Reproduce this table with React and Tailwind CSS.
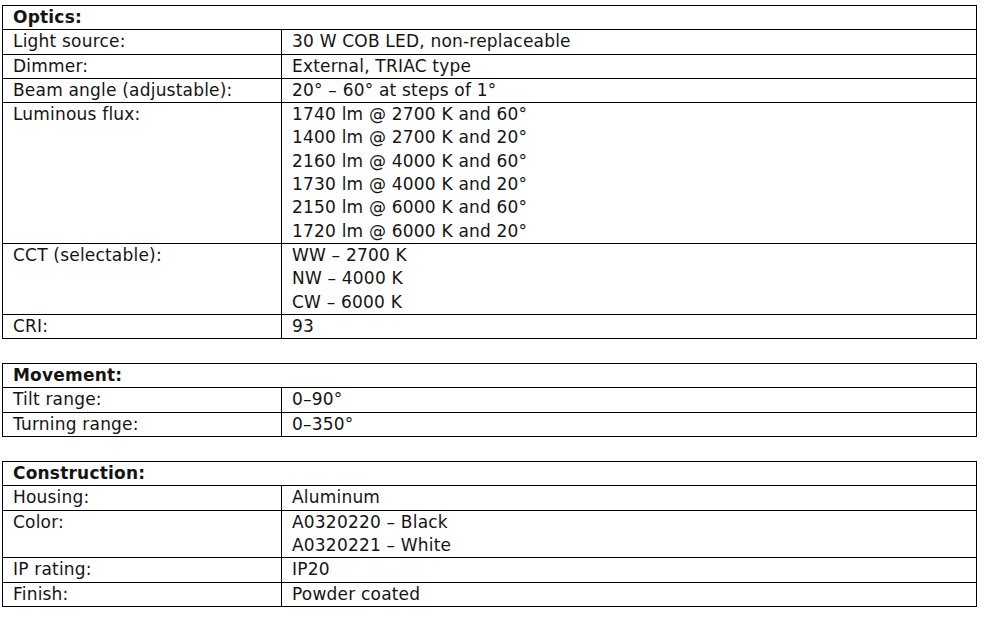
import React from "react";

const tables = [
  {
    title: "Optics:",
    rows: [
      ["Light source:", ["30 W COB LED, non-replaceable"]],
      ["Dimmer:", ["External, TRIAC type"]],
      ["Beam angle (adjustable):", ["20° – 60° at steps of 1°"]],
      [
        "Luminous flux:",
        [
          "1740 lm @ 2700 K and 60°",
          "1400 lm @ 2700 K and 20°",
          "2160 lm @ 4000 K and 60°",
          "1730 lm @ 4000 K and 20°",
          "2150 lm @ 6000 K and 60°",
          "1720 lm @ 6000 K and 20°",
        ],
      ],
      ["CCT (selectable):", ["WW – 2700 K", "NW – 4000 K", "CW – 6000 K"]],
      ["CRI:", ["93"]],
    ],
  },
  {
    title: "Movement:",
    rows: [
      ["Tilt range:", ["0–90°"]],
      ["Turning range:", ["0–350°"]],
    ],
  },
  {
    title: "Construction:",
    rows: [
      ["Housing:", ["Aluminum"]],
      ["Color:", ["A0320220 – Black", "A0320221 – White"]],
      ["IP rating:", ["IP20"]],
      ["Finish:", ["Powder coated"]],
    ],
  },
];

function SpecTable({ title, rows }) {
  return (
    <div className="w-[975px] border border-black">
      <div className="pl-[10px] font-bold leading-[23.3px]">{title}</div>
      {rows.map(([label, values], i) => (
        <div key={i} className="flex border-t border-black">
          <div className="w-[278px] shrink-0 pl-[10px] leading-[23.3px]">{label}</div>
          <div className="flex-1 border-l border-black pl-[10px] leading-[23.3px]">
            {values.map((v, j) => (
              <div key={j}>{v}</div>
            ))}
          </div>
        </div>
      ))}
    </div>
  );
}

export default function App() {
  return (
    <div
      className="min-h-[619px] w-[990px] bg-white pl-[2px] pt-[5px] text-[17px] tracking-[0.2px] text-[#141414]"
      style={{ fontFamily: '"DejaVu Sans", sans-serif' }}
    >
      <div className="flex flex-col gap-[24px]">
        {tables.map((t, i) => (
          <SpecTable key={i} {...t} />
        ))}
      </div>
    </div>
  );
}
